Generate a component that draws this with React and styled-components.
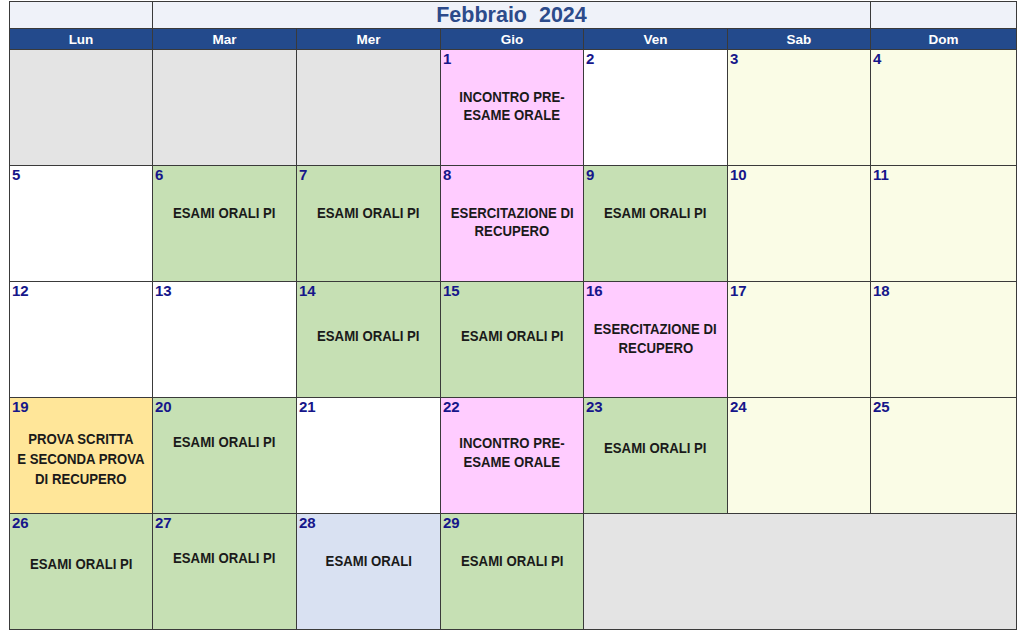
import React from 'react'
import styled, { createGlobalStyle } from 'styled-components'

const GlobalStyle = createGlobalStyle`
  html, body {
    margin: 0;
    padding: 0;
    background: #ffffff;
    font-family: 'Liberation Sans', Arial, sans-serif;
  }
`

const colors = {
  empty: '#e4e4e4',
  white: '#ffffff',
  pink: '#ffccff',
  green: '#c6e0b4',
  weekend: '#fafce6',
  orange: '#ffe699',
  blue: '#d9e1f2',
}

const Page = styled.div`
  width: 1024px;
  height: 638px;
  padding: 1px 0 0 9px;
  box-sizing: border-box;
  overflow: hidden;
`

const Grid = styled.div`
  display: grid;
  width: 1008px;
  box-sizing: border-box;
  grid-template-columns: 142px 143px 143px 142px 143px 142px 145px;
  grid-template-rows: 26px 20px repeat(5, 115px);
  gap: 1px;
  padding: 1px;
  background: #3a3a3a;
`

const TitleCell = styled.div`
  grid-column: ${props => props.span || 'auto'};
  background: #eff2f9;
  display: flex;
  align-items: center;
  justify-content: center;
  font-size: 21.5px;
  font-weight: bold;
  color: #2c4b8b;
  white-space: pre;
`

const DayHead = styled.div`
  background: #234a8c;
  color: #ffffff;
  font-size: 13.5px;
  font-weight: bold;
  display: flex;
  align-items: center;
  justify-content: center;
  padding-top: 1px;
`

const Cell = styled.div`
  grid-column: ${props => props.span || 'auto'};
  background: ${props => colors[props.tone]};
  padding: 1px 2px;
  display: flex;
  flex-direction: column;
  overflow: hidden;
`

const DayNum = styled.div`
  font-size: 15px;
  line-height: 16px;
  font-weight: bold;
  color: #16168a;
`

const Event = styled.div`
  margin-top: ${props => props.top}px;
  display: flex;
  flex-direction: column;
  align-items: center;
  font-size: 15.5px;
  line-height: ${props => props.lh || 18}px;
  font-weight: bold;
  color: #1a1a1a;
  white-space: nowrap;
`

const EventLine = styled.div`
  transform: scaleX(0.85);
`

const days = ['Lun', 'Mar', 'Mer', 'Gio', 'Ven', 'Sab', 'Dom']

const ESAMI = 'ESAMI ORALI PI'
const INCONTRO = ['INCONTRO PRE-', 'ESAME ORALE']
const ESERC = ['ESERCITAZIONE DI', 'RECUPERO']

const cells = [
  { tone: 'empty' }, { tone: 'empty' }, { tone: 'empty' },
  { n: 1, tone: 'pink', ev: INCONTRO, top: 21 },
  { n: 2, tone: 'white' },
  { n: 3, tone: 'weekend' },
  { n: 4, tone: 'weekend' },

  { n: 5, tone: 'white' },
  { n: 6, tone: 'green', ev: [ESAMI], top: 21 },
  { n: 7, tone: 'green', ev: [ESAMI], top: 21 },
  { n: 8, tone: 'pink', ev: ESERC, top: 21 },
  { n: 9, tone: 'green', ev: [ESAMI], top: 21 },
  { n: 10, tone: 'weekend' },
  { n: 11, tone: 'weekend' },

  { n: 12, tone: 'white' },
  { n: 13, tone: 'white' },
  { n: 14, tone: 'green', ev: [ESAMI], top: 28 },
  { n: 15, tone: 'green', ev: [ESAMI], top: 28 },
  { n: 16, tone: 'pink', ev: ESERC, top: 20, lh: 19 },
  { n: 17, tone: 'weekend' },
  { n: 18, tone: 'weekend' },

  { n: 19, tone: 'orange', ev: ['PROVA SCRITTA', 'E SECONDA PROVA', 'DI RECUPERO'], top: 14, lh: 20 },
  { n: 20, tone: 'green', ev: [ESAMI], top: 18 },
  { n: 21, tone: 'white' },
  { n: 22, tone: 'pink', ev: INCONTRO, top: 18, lh: 19 },
  { n: 23, tone: 'green', ev: [ESAMI], top: 24 },
  { n: 24, tone: 'weekend' },
  { n: 25, tone: 'weekend' },

  { n: 26, tone: 'green', ev: [ESAMI], top: 24 },
  { n: 27, tone: 'green', ev: [ESAMI], top: 18 },
  { n: 28, tone: 'blue', ev: ['ESAMI ORALI'], top: 21 },
  { n: 29, tone: 'green', ev: [ESAMI], top: 21 },
  { tone: 'empty', span: 'span 3' },
]

export default function App() {
  return (
    <Page>
      <GlobalStyle />
      <Grid>
        <TitleCell />
        <TitleCell span="span 5">{'Febbraio  2024'}</TitleCell>
        <TitleCell />
        {days.map(d => <DayHead key={d}>{d}</DayHead>)}
        {cells.map((c, i) => (
          <Cell key={i} tone={c.tone} span={c.span}>
            {c.n && <DayNum>{c.n}</DayNum>}
            {c.ev && (
              <Event top={c.top} lh={c.lh}>
                {c.ev.map(line => <EventLine key={line}>{line}</EventLine>)}
              </Event>
            )}
          </Cell>
        ))}
      </Grid>
    </Page>
  )
}
